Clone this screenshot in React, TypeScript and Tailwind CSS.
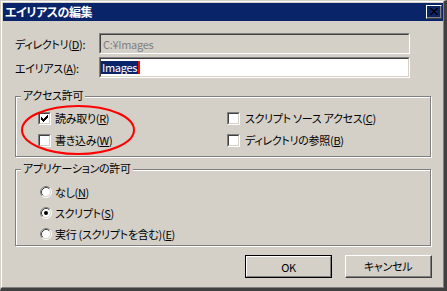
const Check = ({ checked }: { checked?: boolean }) => (
  <span className="flex w-[13px] h-[13px] shrink-0 border-t border-l border-t-[#808080] border-l-[#808080] border-r border-b border-r-white border-b-white">
    <span className="flex flex-1 items-center justify-center bg-white border-t border-l border-t-[#404040] border-l-[#404040] border-r border-b border-r-[#d4d0c8] border-b-[#d4d0c8]">
      {checked && (
        <svg width="7" height="7" viewBox="0 0 7 7" shapeRendering="crispEdges">
          <rect x="0" y="2" width="1" height="3" fill="#000" />
          <rect x="1" y="3" width="1" height="3" fill="#000" />
          <rect x="2" y="4" width="1" height="3" fill="#000" />
          <rect x="3" y="3" width="1" height="3" fill="#000" />
          <rect x="4" y="2" width="1" height="3" fill="#000" />
          <rect x="5" y="1" width="1" height="3" fill="#000" />
          <rect x="6" y="0" width="1" height="3" fill="#000" />
        </svg>
      )}
    </span>
  </span>
);

const Radio = ({ on }: { on?: boolean }) => (
  <svg width="12" height="12" viewBox="0 0 12 12" className="shrink-0">
    <circle cx="6" cy="6" r="5" fill="#fff" />
    <path d="M2.11 9.89A5.5 5.5 0 0 1 9.89 2.11" fill="none" stroke="#808080" strokeWidth="1" />
    <path d="M9.89 2.11A5.5 5.5 0 0 1 2.11 9.89" fill="none" stroke="#fff" strokeWidth="1" />
    <path d="M2.82 9.18A4.5 4.5 0 0 1 9.18 2.82" fill="none" stroke="#404040" strokeWidth="1" />
    <path d="M9.18 2.82A4.5 4.5 0 0 1 2.82 9.18" fill="none" stroke="#d4d0c8" strokeWidth="1" />
    {on && <circle cx="6" cy="6" r="2" fill="#000" />}
  </svg>
);

const Key = ({ k }: { k: string }) => <span className="underline underline-offset-[1px]">{k}</span>;

export default function App() {
  return (
    <div className="relative w-[447px] h-[291px] bg-[#d4d0c8] border-l border-t border-l-[#d4d0c8] border-t-[#d4d0c8] border-r-[3px] border-b-[3px] border-r-[#404040] border-b-[#404040] font-['Noto_Sans_CJK_JP',sans-serif] [font-feature-settings:'palt'] text-[11px] tracking-[-0.3px] leading-[14px] text-black">
      <div className="flex h-full flex-col border-l border-t border-l-white border-t-white border-r border-b border-r-[#808080] border-b-[#808080] pl-[1px] pt-[1px]">
        {/* title bar */}
        <div className="flex h-[18px] items-start bg-[#0a246a] pl-[2px] pr-[1px]">
          <span className="flex-1 text-[12px] tracking-[-0.5px] leading-[18px] font-bold text-white">エイリアスの編集</span>
          <div className="mt-[2px] flex w-[16px] h-[14px] border-t border-l border-t-white border-l-white border-r border-b border-r-[#404040] border-b-[#404040]">
            <div className="flex flex-1 items-center justify-center border-r border-b border-r-[#808080] border-b-[#808080]">
              <svg width="8" height="7" viewBox="0 0 8 7" shapeRendering="crispEdges">
                <path d="M0 0h2v1h1v1h2V1h1V0h2v1H7v1H6v1H5v1h1v1h1v1h1v1H6V6H5V5H3v1H2v1H0V6h1V5h1V4h1V3H2V2H1V1H0z" fill="#000" />
              </svg>
            </div>
          </div>
        </div>

        <div className="flex flex-col pl-[12px] pt-[12px] pr-[11px]">
          <div className="flex h-[21px] items-center">
            <span className="w-[84px]">ディレクトリ(<Key k="D" />):</span>
            <div className="flex w-[311px] h-[21px] border-t border-l border-t-[#808080] border-l-[#808080] border-r border-b border-r-white border-b-white">
              <div className="flex flex-1 items-center pl-[2px] text-[#808080] border-t border-l border-t-[#404040] border-l-[#404040] border-r border-b border-r-[#d4d0c8] border-b-[#d4d0c8]">
                C:¥Images
              </div>
            </div>
          </div>
          <div className="mt-[3px] flex h-[21px] items-center">
            <span className="w-[84px]">エイリアス(<Key k="A" />):</span>
            <div className="flex w-[311px] h-[21px] border-t border-l border-t-[#808080] border-l-[#808080] border-r border-b border-r-white border-b-white">
              <div className="flex flex-1 items-center bg-white border-t border-l border-t-[#404040] border-l-[#404040] border-r border-b border-r-[#d4d0c8] border-b-[#d4d0c8]">
                <span className="bg-[#0a246a] px-[1px] leading-[13px] text-white">Images</span>
                <span className="w-[2px] h-[13px] bg-[#ff0000]" />
              </div>
            </div>
          </div>

          {/* access permissions */}
          <div className="relative mt-[18px] w-[416px] h-[61px] border border-[#808080] shadow-[inset_1px_1px_0_#fff,1px_1px_0_#fff]">
            <span className="absolute left-[5px] -top-[9px] bg-[#d4d0c8] px-[2px] leading-[15px]">アクセス許可</span>
            <div className="grid grid-cols-[189px_1fr] pl-[22px] pt-[10px]">
              <div className="flex h-[22px] items-center gap-[4px]">
                <Check checked />
                <span>読み取り(<Key k="R" />)</span>
              </div>
              <div className="flex h-[22px] items-center gap-[5px]">
                <Check />
                <span>スクリプト ソース アクセス(<Key k="C" />)</span>
              </div>
              <div className="flex h-[22px] items-center gap-[4px]">
                <Check />
                <span>書き込み(<Key k="W" />)</span>
              </div>
              <div className="flex h-[22px] items-center gap-[5px]">
                <Check />
                <span>ディレクトリの参照(<Key k="B" />)</span>
              </div>
            </div>
          </div>

          {/* application permissions */}
          <div className="relative mt-[12px] w-[416px] h-[77px] border border-[#808080] shadow-[inset_1px_1px_0_#fff,1px_1px_0_#fff]">
            <span className="absolute left-[5px] -top-[9px] bg-[#d4d0c8] px-[2px] leading-[15px]">アプリケーションの許可</span>
            <div className="flex flex-col pl-[24px] pt-[11px]">
              <div className="flex h-[21px] items-center gap-[3px]">
                <Radio />
                <span>なし(<Key k="N" />)</span>
              </div>
              <div className="flex h-[21px] items-center gap-[3px]">
                <Radio on />
                <span>スクリプト(<Key k="S" />)</span>
              </div>
              <div className="flex h-[21px] items-center gap-[3px]">
                <Radio />
                <span>実行 (スクリプトを含む)(<Key k="E" />)</span>
              </div>
            </div>
          </div>

          <div className="mt-[9px] flex justify-end gap-[13px]">
            <button className="flex w-[87px] h-[23px] border border-black">
              <span className="flex flex-1 items-center justify-center border-t border-l border-t-white border-l-white border-r border-b border-r-[#808080] border-b-[#808080]">
                OK
              </span>
            </button>
            <button className="flex w-[87px] h-[23px] border-t border-l border-t-white border-l-white border-r border-b border-r-[#404040] border-b-[#404040]">
              <span className="flex flex-1 items-center justify-center border-r border-b border-r-[#808080] border-b-[#808080]">
                キャンセル
              </span>
            </button>
          </div>
        </div>
      </div>

      {/* red annotation ring */}
      <svg className="absolute left-[19px] top-[103px]" width="118" height="52" viewBox="0 0 118 52">
        <ellipse cx="58" cy="26" rx="56" ry="24" fill="none" stroke="#ff0000" strokeWidth="2" />
      </svg>
    </div>
  );
}
